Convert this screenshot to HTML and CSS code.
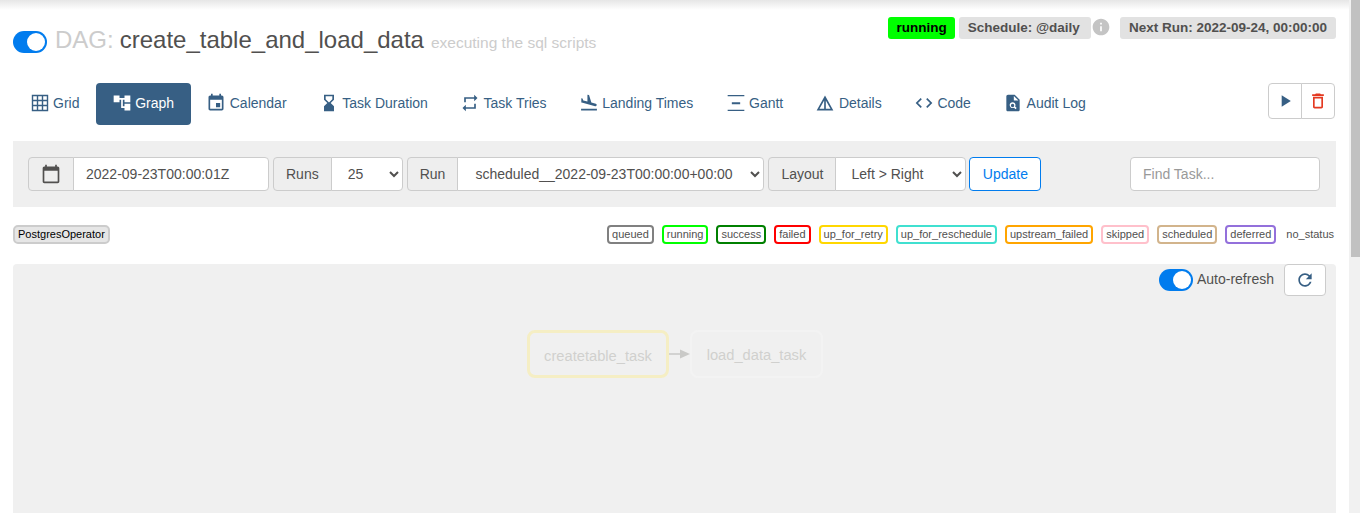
FILE: index.html
```html
<!DOCTYPE html>
<html lang="en">
<head>
    <meta charset="UTF-8">
    <meta name="viewport" content="width=device-width, initial-scale=1.0">
    <title>create_table_and_load_data - Graph</title>
    <link rel="stylesheet" href="styles.css">
</head>
<body>
    <div class="top-shadow"></div>
    <div class="scrollbar"><div class="scrollbar-thumb"></div></div>

    <div class="container">
        <div class="dag-header">
            <h4 class="dag-title">
                <span class="switch"><span class="knob"></span></span>
                <span class="dag-label">DAG:</span>
                <span class="dag-name">create_table_and_load_data</span>
                <small class="dag-desc">executing the sql scripts</small>
            </h4>
            <div class="dag-badges">
                <span class="badge badge-running">running</span>
                <span class="badge badge-schedule">Schedule: @daily</span>
                <svg class="info-icon" viewBox="0 0 24 24"><path d="M12 2C6.48 2 2 6.48 2 12s4.48 10 10 10 10-4.48 10-10S17.52 2 12 2zm1 15h-2v-6h2v6zm0-8h-2V7h2v2z"/></svg>
                <span class="badge badge-next">Next Run: 2022-09-24, 00:00:00</span>
            </div>
        </div>

        <div class="nav-row">
            <ul class="tabs">
                <li><a href="#">
                    <svg class="icon" viewBox="0 0 24 24"><path d="M3 3h18v18H3zM9 3v18M15 3v18M3 9h18M3 15h18" fill="none" stroke="currentColor" stroke-width="1.7"/></svg>
                    Grid</a></li>
                <li class="active"><a href="#">
                    <svg class="icon" viewBox="0 0 24 24"><path d="M22 11V3h-7v3H9V3H2v8h7V8h2v10h4v3h7v-8h-7v3h-2V8h2v3z"/></svg>
                    Graph</a></li>
                <li><a href="#">
                    <svg class="icon" viewBox="0 0 24 24"><path d="M17 12h-5v5h5v-5zM16 1v2H8V1H6v2H5c-1.11 0-1.99.9-1.99 2L3 19c0 1.1.89 2 2 2h14c1.1 0 2-.9 2-2V5c0-1.1-.9-2-2-2h-1V1h-2zm3 18H5V8h14v11z"/></svg>
                    Calendar</a></li>
                <li><a href="#">
                    <svg class="icon" viewBox="0 0 24 24"><path d="M18 22l-.01-6L14 12l3.990-4.010L18 2H6v6l4 4-4 3.990V22h12zM8 7.500V4h8v3.500l-4 4-4-4z"/></svg>
                    Task Duration</a></li>
                <li><a href="#">
                    <svg class="icon" viewBox="0 0 24 24"><path d="M7 7h10v3l4-4-4-4v3H5v6h2V7zm10 10H7v-3l-4 4 4 4v-3h12v-6h-2v4z"/></svg>
                    Task Tries</a></li>
                <li><a href="#">
                    <svg class="icon" viewBox="0 0 24 24"><path d="M2.500 19h19v2h-19zm7.180-5.730l4.350 1.160 5.310 1.420c.8.21 1.620-.26 1.840-1.060.21-.8-.26-1.620-1.060-1.840l-5.310-1.420-2.760-9.020L10.120 2v8.280L5.150 8.950l-.93-2.320-1.450-.39v5.170l1.600.43 5.310 1.430z"/></svg>
                    Landing Times</a></li>
                <li><a href="#">
                    <svg class="icon" viewBox="0 0 24 24"><path d="M2 2.500h20V4H2zM7 11h10v2.400H7zM2 20h20v1.500H2z"/></svg>
                    Gantt</a></li>
                <li><a href="#">
                    <svg class="icon" viewBox="0 0 24 24"><path d="M12 3L2 21h20L12 3zm1 5.920L18.600 19H13V8.920zm-2 0V19H5.400L11 8.920z"/></svg>
                    Details</a></li>
                <li><a href="#">
                    <svg class="icon" viewBox="0 0 24 24"><path d="M9.400 16.600L4.800 12l4.600-4.600L8 6l-6 6 6 6 1.400-1.400zm5.200 0l4.600-4.600-4.600-4.600L16 6l6 6-6 6-1.400-1.400z"/></svg>
                    Code</a></li>
                <li><a href="#">
                    <svg class="icon" viewBox="0 0 24 24"><path fill-rule="evenodd" d="M14 2H6c-1.100 0-2 .9-2 2v16c0 1.100.89 2 1.990 2H18c1.100 0 2-.9 2-2V8l-6-6zm1.040 17.450l-1.880-1.880c-1.330.71-3.010.53-4.130-.59-1.370-1.370-1.370-3.580 0-4.950 1.370-1.370 3.580-1.370 4.950 0 1.120 1.120 1.310 2.800.59 4.130l1.880 1.880-1.410 1.410zM13 9V3.500L18.500 9H13zM11.500 13a2 2 0 1 0 0 4 2 2 0 0 0 0-4z"/></svg>
                    Audit Log</a></li>
            </ul>
            <div class="actions">
                <button class="action-btn" type="button">
                    <svg class="action-icon" viewBox="0 0 24 24"><path d="M8 5v14l11-7z" fill="#375f84"/></svg>
                </button>
                <button class="action-btn" type="button">
                    <svg class="action-icon" viewBox="0 0 24 24"><path d="M6 19c0 1.100.9 2 2 2h8c1.100 0 2-.9 2-2V7H6v12zM8 9h8v10H8V9zm7.500-5l-1-1h-5l-1 1H5v2h14V4h-3.500z" fill="#e43921"/></svg>
                </button>
            </div>
        </div>

        <form class="filters">
            <div class="input-group">
                <span class="addon">
                    <svg class="cal-icon" viewBox="0 0 24 24"><path d="M20 3h-1V1h-2v2H7V1H5v2H4c-1.100 0-2 .9-2 2v16c0 1.100.9 2 2 2h16c1.100 0 2-.9 2-2V5c0-1.100-.9-2-2-2zm0 18H4V8h16v13z" fill="#51504f"/></svg>
                </span>
                <input class="field field-date" type="text" value="2022-09-23T00:00:01Z">
            </div>
            <div class="input-group">
                <span class="addon">Runs</span>
                <select class="field field-runs"><option>25</option></select>
            </div>
            <div class="input-group">
                <span class="addon">Run</span>
                <select class="field field-run"><option>scheduled__2022-09-23T00:00:00+00:00</option></select>
            </div>
            <div class="input-group">
                <span class="addon">Layout</span>
                <select class="field field-layout"><option>Left &gt; Right</option></select>
            </div>
            <button class="update-btn" type="button">Update</button>
            <input class="find-task" type="text" placeholder="Find Task...">
        </form>

        <div class="legend-row">
            <span class="op-tag">PostgresOperator</span>
            <div class="legend">
                <span class="state state-queued">queued</span>
                <span class="state state-running">running</span>
                <span class="state state-success">success</span>
                <span class="state state-failed">failed</span>
                <span class="state state-retry">up_for_retry</span>
                <span class="state state-resched">up_for_reschedule</span>
                <span class="state state-upstream">upstream_failed</span>
                <span class="state state-skipped">skipped</span>
                <span class="state state-scheduled">scheduled</span>
                <span class="state state-deferred">deferred</span>
                <span class="state state-none">no_status</span>
            </div>
        </div>

        <div class="graph-panel">
            <div class="refresh-bar">
                <span class="switch"><span class="knob"></span></span>
                <span class="refresh-label">Auto-refresh</span>
                <button class="refresh-btn" type="button">
                    <svg class="refresh-icon" viewBox="0 0 24 24"><path d="M17.650 6.350C16.200 4.900 14.210 4 12 4c-4.420 0-7.990 3.580-7.990 8s3.570 8 7.990 8c3.730 0 6.840-2.550 7.730-6h-2.080c-.82 2.330-3.040 4-5.650 4-3.310 0-6-2.690-6-6s2.690-6 6-6c1.660 0 3.140.69 4.220 1.780L13 11h7V4l-2.350 2.350z" fill="#375f84"/></svg>
                </button>
            </div>
            <div class="dag-graph">
                <div class="node node-running">createtable_task</div>
                <svg class="edge" viewBox="0 0 21 12"><path d="M0 6h12" stroke="#c9c9c7" stroke-width="1.5"/><path d="M11 1.500L21 6l-10 4.500z" fill="#c9c9c7"/></svg>
                <div class="node node-idle">load_data_task</div>
            </div>
        </div>
    </div>
</body>
</html>
```
FILE: styles.css
```css
* {
    box-sizing: border-box;
}
html, body {
    height: 513px;
    overflow: hidden;
}
body {
    margin: 0;
    font-family: "Liberation Sans", Arial, sans-serif;
    font-size: 14px;
    color: #51504f;
    background: #fff;
}
.top-shadow {
    position: absolute;
    top: 0;
    left: 0;
    right: 11px;
    height: 10px;
    background: linear-gradient(#e6e6e6, #fff);
}
.scrollbar {
    position: absolute;
    top: 0;
    right: 0;
    bottom: 0;
    width: 11px;
    padding-left: 2px;
    background: #f1f1f1;
}
.scrollbar-thumb {
    height: 257px;
    background: #c1c1c1;
}
.container {
    width: 1350px;
    padding: 15px 14px 0 13px;
}

/* header */
.dag-header {
    display: flex;
    justify-content: space-between;
    align-items: flex-start;
    height: 68px;
}
.dag-title {
    display: flex;
    align-items: center;
    margin: 10px 0 0;
    font-weight: 400;
    font-size: 24px;
    line-height: 30px;
    white-space: nowrap;
}
.dag-label {
    color: #ccc;
    margin: 0 6px 4px 8px;
}
.dag-name {
    color: #51504f;
    margin-bottom: 4px;
}
.dag-desc {
    font-size: 15.5px;
    color: #ccc;
    margin-left: 7px;
    padding-top: 2px;
}
.switch {
    display: inline-block;
    flex: none;
    width: 34px;
    height: 22px;
    padding: 2px;
    border-radius: 11px;
    background: #017cee;
}
.knob {
    display: block;
    width: 18px;
    height: 18px;
    margin-left: 12px;
    border-radius: 50%;
    background: #fff;
}
.dag-badges {
    display: flex;
    align-items: center;
    margin-top: 2px;
}
.badge {
    display: inline-block;
    height: 22px;
    padding: 0 9px;
    line-height: 21px;
    border-radius: 3px;
    background: #e2e2e2;
    font-size: 13.5px;
    font-weight: 700;
    white-space: nowrap;
    margin-left: 4px;
}
.badge-running {
    background: #00ff00;
    color: #000;
    padding: 0 8px;
}
.badge-schedule {
    padding-right: 11px;
}
.badge-next {
    margin-left: 9px;
}
.info-icon {
    width: 20px;
    height: 20px;
    margin: 0 0 2px 0;
    fill: #c4c4c4;
}

/* tabs */
.nav-row {
    display: flex;
    justify-content: space-between;
    align-items: flex-start;
    height: 58px;
}
.tabs {
    display: flex;
    list-style: none;
    margin: 0 0 0 1px;
    padding: 0;
}
.tabs a {
    display: flex;
    align-items: center;
    height: 42px;
    padding: 0 16.7px 2px 15.5px;
    color: #375f84;
    text-decoration: none;
    border-radius: 4px;
    white-space: nowrap;
}
.tabs li.active a {
    background: #375f84;
    color: #fff;
}
.icon {
    width: 20px;
    height: 20px;
    margin-right: 3.5px;
    fill: currentColor;
}
.actions {
    display: flex;
    margin-right: 1px;
}
.action-btn {
    width: 34px;
    height: 36px;
    padding: 0;
    background: #fff;
    border: 1px solid #ccc;
    border-radius: 4px 0 0 4px;
}
.action-btn + .action-btn {
    margin-left: -1px;
    border-radius: 0 4px 4px 0;
}
.action-icon {
    display: block;
    width: 20px;
    height: 20px;
    margin: 0 auto;
}

/* filters */
.filters {
    display: flex;
    align-items: center;
    height: 66px;
    padding: 0 16px 0 15px;
    background: #efefef;
}
.input-group {
    display: flex;
    height: 34px;
    margin-right: 4px;
}
.addon {
    display: flex;
    align-items: center;
    padding: 0 12px;
    background: #eee;
    border: 1px solid #ccc;
    border-radius: 4px 0 0 4px;
}
.cal-icon {
    width: 20px;
    height: 20px;
}
.field {
    height: 34px;
    margin: 0 0 0 -1px;
    padding: 0 12px;
    border: 1px solid #ccc;
    border-radius: 0 4px 4px 0;
    background: #fff;
    font-family: inherit;
    font-size: 14px;
    color: #51504f;
}
.field-date {
    width: 196px;
}
.field-runs {
    width: 72px;
}
.field-run {
    width: 307px;
    padding-left: 13px;
}
.field-layout {
    width: 131px;
    padding-left: 11px;
}
.update-btn {
    height: 34px;
    width: 72px;
    margin-left: -1px;
    padding: 0;
    background: #fff;
    border: 1px solid #017cee;
    border-radius: 4px;
    color: #017cee;
    font-family: inherit;
    font-size: 14px;
}
.find-task {
    width: 190px;
    height: 34px;
    margin-left: auto;
    padding: 0 12px;
    border: 1px solid #ccc;
    border-radius: 4px;
    font-family: inherit;
    font-size: 14px;
}
.find-task::placeholder {
    color: #999;
}

/* legend */
.legend-row {
    display: flex;
    justify-content: space-between;
    align-items: center;
    height: 57px;
    padding-bottom: 3px;
}
.op-tag {
    height: 19px;
    padding: 0 3px;
    line-height: 15px;
    font-size: 11px;
    color: #000;
    background: #e6e6e6;
    border: 2px solid #ccc;
    border-radius: 5px;
}
.legend {
    display: flex;
    gap: 8px;
}
.state {
    height: 19px;
    padding: 0 3px;
    line-height: 15px;
    font-size: 11px;
    background: #fff;
    border: 2px solid #000;
    border-radius: 4px;
    white-space: nowrap;
}
.state-queued { border-color: #808080; }
.state-running { border-color: #00ff00; }
.state-success { border-color: #008000; }
.state-failed { border-color: #ff0000; }
.state-retry { border-color: #ffd700; }
.state-resched { border-color: #40e0d0; }
.state-upstream { border-color: #ffa500; }
.state-skipped { border-color: #ffc0cb; }
.state-scheduled { border-color: #d2b48c; }
.state-deferred { border-color: #9370db; }
.state-none {
    padding: 0;
    border-color: #fff;
}

/* graph */
.graph-panel {
    height: 249px;
    background: #f0f0f0;
    border-radius: 4px 4px 0 0;
}
.refresh-bar {
    display: flex;
    justify-content: flex-end;
    align-items: center;
    padding-right: 10px;
}
.refresh-label {
    margin: 0 10px 2px 4px;
}
.refresh-btn {
    width: 42px;
    height: 32px;
    padding: 0;
    background: #fff;
    border: 1px solid #ccc;
    border-radius: 4px;
}
.refresh-icon {
    display: block;
    width: 20px;
    height: 20px;
    margin: 0 auto;
}
.dag-graph {
    display: flex;
    align-items: center;
    margin: 34px 0 0 514px;
}
.node {
    height: 48px;
    line-height: 47px;
    text-align: center;
    font-size: 14.7px;
    color: #d0d0ce;
    border-radius: 8px;
    background: #f0f0f0;
}
.node-running {
    width: 142px;
    border: 3px solid #f5eec4;
}
.node-idle {
    width: 133px;
    border: 2px solid #f3f3f3;
}
.edge {
    width: 21px;
    height: 12px;
}
```
